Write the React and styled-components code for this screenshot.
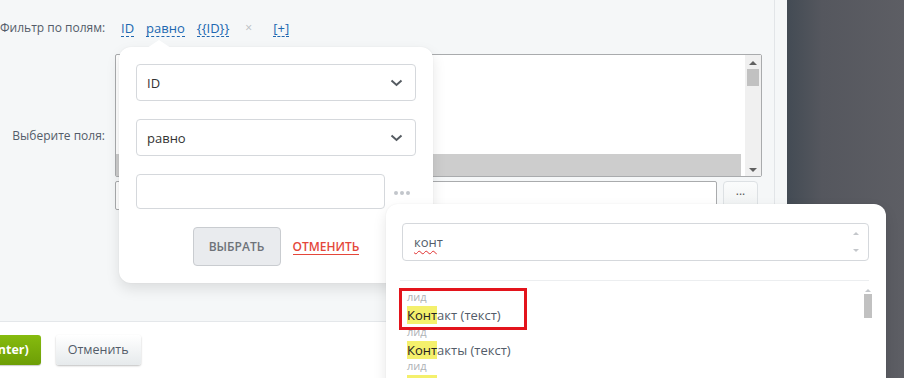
import React from 'react';
import styled, { createGlobalStyle } from 'styled-components';

const Global = createGlobalStyle`
  html, body { margin: 0; padding: 0; }
  body { font-family: "Open Sans", "Liberation Sans", sans-serif; color: #333; }
`;

const Screen = styled.div`
  position: relative;
  width: 904px;
  height: 378px;
  overflow: hidden;
  display: flex;
  background: #f5f7f8;
`;

const Main = styled.div`
  width: 774px;
  display: flex;
  flex-direction: column;
  border-right: 1px solid #e2e5e8;
`;

const Gutter = styled.div`
  width: 12px;
  background: #f5f7f8;
`;

const Dark = styled.div`
  flex: 1;
  background: linear-gradient(90deg, #434b54 0%, #55575e 30%, #5d5e64 100%);
`;

const Form = styled.div`
  height: 322px;
  box-sizing: border-box;
  border-bottom: 1px solid #e4e7ea;
  padding: 18px 12px 0 0;
  display: grid;
  grid-template-columns: 105px 1fr;
  grid-template-rows: 20px 139px 34px;
  column-gap: 10px;
`;

const Label = styled.div`
  font-size: 12px;
  color: #535c69;
  text-align: right;
  white-space: nowrap;
  line-height: 20px;
  grid-row: ${p => p.$row || 'auto'};
  padding-top: ${p => p.$top || 0}px;
`;

const Links = styled.div`
  display: flex;
  align-items: center;
  gap: 12px;
  padding-left: 6px;
  font-size: 13px;
  line-height: 16px;
`;

const Link = styled.span`
  color: #2067b0;
  border-bottom: 1px dashed #2067b0;
  margin-left: ${p => p.$ml || 0}px;
`;

const Cross = styled.span`
  color: #b9bdc2;
  font-size: 12px;
  margin-left: 4px;
`;

const Fields = styled.div`
  margin-top: 16px;
  height: 123px;
  box-sizing: border-box;
  border: 1px solid #a9abad;
  border-radius: 2px;
  background: #fff;
  display: flex;
  align-items: flex-end;
`;

const FieldsList = styled.div`
  flex: 1;
  display: flex;
  flex-direction: column;
  justify-content: flex-end;
  padding-right: 4px;
`;

const SelectedRow = styled.div`
  height: 22px;
  background: #cdcdcd;
`;

const Scroll = styled.div`
  width: 16px;
  height: 100%;
  background: #f0f0f0;
  display: flex;
  flex-direction: column;
  align-items: center;
  justify-content: space-between;
  box-sizing: border-box;
  padding: 6px 0 4px;
`;

const Thumb = styled.div`
  width: ${p => p.$w || 12}px;
  height: ${p => p.$h}px;
  background: #c1c1c1;
`;

const Tri = styled.div`
  width: 0;
  height: 0;
  border-left: ${p => p.$s}px solid transparent;
  border-right: ${p => p.$s}px solid transparent;
  ${p => (p.$down ? 'border-top' : 'border-bottom')}: ${p => p.$s}px solid ${p => p.$c || '#606060'};
`;

const ScrollTop = styled.div`
  display: flex;
  flex-direction: column;
  align-items: center;
  gap: 4px;
`;

const TextRow = styled.div`
  grid-column: 2;
  display: flex;
  gap: 6px;
  margin-top: 4px;
`;

const TextBox = styled.div`
  width: 602px;
  height: 29px;
  box-sizing: border-box;
  border: 1px solid #a9abad;
  border-radius: 2px;
  background: #fff;
`;

const DotsButton = styled.div`
  width: 35px;
  height: 30px;
  box-sizing: border-box;
  border-radius: 4px 4px 0 0;
  border: 1px solid #dde1e4;
  background: linear-gradient(#fbfcfc, #eef1f2);
  font-size: 12px;
  color: #555;
  text-align: center;
  line-height: 18px;
`;

const Footer = styled.div`
  flex: 1;
  background: #fff;
  display: flex;
  align-items: flex-start;
  gap: 15px;
  padding-top: 13px;
`;

const Button = styled.div`
  height: 30px;
  box-sizing: border-box;
  border-radius: 3px;
  font-size: 12.5px;
  line-height: 30px;
  padding: 0 12px;
  white-space: nowrap;
  ${p =>
    p.$primary
      ? `background: linear-gradient(#86bb0e, #6d9e06);
         color: #fff; font-weight: 700; margin-left: -129px;
         box-shadow: 0 1px 1px rgba(0,0,0,.2);`
      : `background: linear-gradient(#ffffff, #e6eaec);
         color: #535c69; box-shadow: 0 1px 2px rgba(0,0,0,.25);`}
`;

const Popup = styled.div`
  position: absolute;
  left: ${p => p.$x}px;
  top: ${p => p.$y}px;
  width: ${p => p.$w}px;
  height: ${p => p.$h}px;
  box-sizing: border-box;
  background: #fff;
  border-radius: 12px;
  box-shadow: 0 6px 14px rgba(0, 0, 0, 0.1), 0 0 2px rgba(0, 0, 0, 0.06);
  padding: ${p => p.$pad};
  display: flex;
  flex-direction: column;
`;

const Arrow = styled.div`
  position: absolute;
  left: 28px;
  top: -7px;
  width: 0;
  height: 0;
  border-left: 12px solid transparent;
  border-right: 12px solid transparent;
  border-bottom: 8px solid #fff;
`;

const Select = styled.div`
  height: 37px;
  box-sizing: border-box;
  border: 1px solid #d5d8dc;
  border-radius: 4px;
  display: flex;
  align-items: center;
  justify-content: space-between;
  padding: 0 12px 0 10px;
  font-size: 13px;
  color: #333;
  margin-bottom: 18px;
`;

const InputRow = styled.div`
  display: flex;
  align-items: center;
  gap: 9px;
  margin-bottom: 18px;
`;

const Input = styled.div`
  width: 249px;
  height: 35px;
  box-sizing: border-box;
  border: 1px solid #d5d8dc;
  border-radius: 4px;
`;

const Dots = styled.div`
  display: flex;
  gap: 2px;
  margin-top: 2px;
`;

const Dot = styled.span`
  width: 4px;
  height: 4px;
  border-radius: 50%;
  background: #c2c6cb;
`;

const Actions = styled.div`
  display: flex;
  justify-content: center;
  align-items: center;
  gap: 12px;
`;

const GrayButton = styled.div`
  width: 88px;
  height: 39px;
  box-sizing: border-box;
  border: 1px solid #c9ccd0;
  border-radius: 4px;
  background: #e9ebee;
  color: #6e7379;
  font-size: 12px;
  font-weight: 600;
  display: flex;
  align-items: center;
  justify-content: center;
`;

const RedLink = styled.span`
  color: #e4473a;
  font-size: 12px;
  font-weight: 600;
  border-bottom: 1px solid #e4473a;
  line-height: 15px;
`;

const Search = styled.div`
  height: 38px;
  box-sizing: border-box;
  border: 1px solid #d5d8dc;
  border-radius: 4px;
  display: flex;
  align-items: center;
  justify-content: space-between;
  padding: 0 9px 0 11px;
  font-size: 13px;
  color: #535c69;
`;

const Spell = styled.span`
  text-decoration: underline wavy #e03030;
  text-decoration-thickness: 1px;
  text-underline-offset: 3px;
`;

const MiniArrows = styled.div`
  display: flex;
  flex-direction: column;
  gap: 14px;
`;

const Divider = styled.div`
  height: 1px;
  background: #eceef0;
  margin: 19px 0 0 -2px;
`;

const List = styled.div`
  display: flex;
  padding-top: 10px;
`;

const Items = styled.div`
  flex: 1;
  display: flex;
  flex-direction: column;
  padding-left: 5px;
`;

const Item = styled.div`
  display: flex;
  flex-direction: column;
  align-items: flex-start;
  height: 34.5px;
`;

const Group = styled.span`
  font-size: 11px;
  color: #aeb2b6;
  line-height: 12px;
`;

const Title = styled.span`
  font-size: 13px;
  color: #535c69;
  line-height: 18px;
  margin-top: 3px;
`;

const Mark = styled.mark`
  background: #f4f06c;
  color: #222;
`;

const ListScroll = styled.div`
  width: 10px;
  display: flex;
  flex-direction: column;
  align-items: center;
  gap: 2px;
  margin: -2px -4px 0 0;
`;

const Annotation = styled.div`
  position: absolute;
  left: 399px;
  top: 288px;
  width: 128px;
  height: 42px;
  box-sizing: border-box;
  border: 3px solid #e3141c;
`;

const Chevron = () => (
  <svg width="13" height="8" viewBox="0 0 13 8">
    <path d="M1.5 1.5 L6.5 6 L11.5 1.5" fill="none" stroke="#555b61" strokeWidth="2" />
  </svg>
);

const items = [
  { rest: 'акт (текст)' },
  { rest: 'акты (текст)' },
  { rest: 'актный телефон' },
];

export default function App() {
  return (
    <Screen>
      <Global />
      <Main>
        <Form>
          <Label>Фильтр по полям:</Label>
          <Links>
            <Link>ID</Link>
            <Link>равно</Link>
            <Link>{'{{ID}}'}</Link>
            <Cross>×</Cross>
            <Link $ml={9}>[+]</Link>
          </Links>
          <Label $row="2 / span 2" $top={88}>Выберите поля:</Label>
          <Fields>
            <FieldsList>
              <SelectedRow />
            </FieldsList>
            <Scroll>
              <ScrollTop>
                <Tri $s={4} />
                <Thumb $h={17} />
              </ScrollTop>
              <Tri $s={4} $down />
            </Scroll>
          </Fields>
          <TextRow>
            <TextBox />
            <DotsButton>...</DotsButton>
          </TextRow>
        </Form>
        <Footer>
          <Button $primary>Сохранить (Ctrl+Enter)</Button>
          <Button>Отменить</Button>
        </Footer>
      </Main>
      <Gutter />
      <Dark />

      <Popup $x={119} $y={47} $w={314} $h={236} $pad="17px">
        <Arrow />
        <Select>
          ID
          <Chevron />
        </Select>
        <Select>
          равно
          <Chevron />
        </Select>
        <InputRow>
          <Input />
          <Dots>
            <Dot />
            <Dot />
            <Dot />
          </Dots>
        </InputRow>
        <Actions>
          <GrayButton>ВЫБРАТЬ</GrayButton>
          <RedLink>ОТМЕНИТЬ</RedLink>
        </Actions>
      </Popup>

      <Popup $x={386} $y={204} $w={500} $h={200} $pad="19px 17px 0 16px">
        <Search>
          <span>
            <Spell>кон</Spell>т
          </span>
          <MiniArrows>
            <Tri $s={3} $c="#c4c7cb" />
            <Tri $s={3} $c="#c4c7cb" $down />
          </MiniArrows>
        </Search>
        <Divider />
        <List>
          <Items>
            {items.map((it, i) => (
              <Item key={i}>
                <Group>лид</Group>
                <Title>
                  <Mark>Конт</Mark>
                  {it.rest}
                </Title>
              </Item>
            ))}
          </Items>
          <ListScroll>
            <Tri $s={3} $c="#c4c7cb" />
            <Thumb $w={8} $h={24} />
          </ListScroll>
        </List>
      </Popup>

      <Annotation />
    </Screen>
  );
}
